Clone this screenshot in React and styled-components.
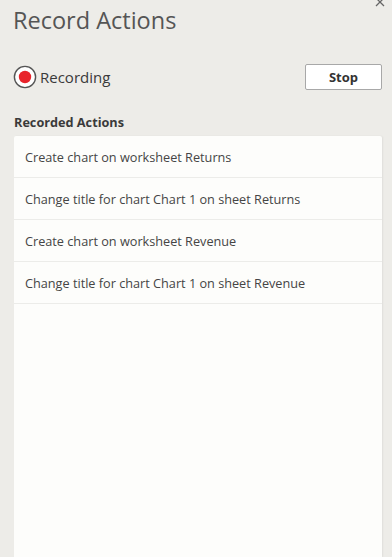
import React from "react";
import styled, { createGlobalStyle } from "styled-components";

const Global = createGlobalStyle`
  html, body { margin: 0; padding: 0; height: 100%; }
  body { background: #edece8; font-family: "Open Sans", "Noto Sans", sans-serif; }
  #root { height: 100%; }
`;

const Pane = styled.div`
  position: relative;
  height: 557px;
  box-sizing: border-box;
  padding: 0 10px 0 14px;
  display: flex;
  flex-direction: column;
  overflow: hidden;
`;

const Close = styled.svg`
  position: absolute;
  top: -2px;
  right: 6px;
`;

const Title = styled.h1`
  margin: 3px 0 0 -1px;
  font-size: 23.5px;
  font-weight: 400;
  color: #555;
  line-height: 34px;
`;

const StatusRow = styled.div`
  margin-top: 27px;
  display: flex;
  align-items: center;
  justify-content: space-between;
  height: 26px;
`;

const Status = styled.div`
  display: flex;
  align-items: center;
  gap: 3px;
  margin-left: -1px;
  font-size: 15px;
  color: #3a3a3a;
`;

const StopButton = styled.button`
  width: 77px;
  height: 26px;
  background: #fff;
  border: 1px solid #a8a8a8;
  border-radius: 2px;
  font-family: "Open Sans", sans-serif;
  font-weight: 700;
  font-size: 13px;
  color: #333;
  padding: 0;
`;

const SectionLabel = styled.div`
  margin-top: 23px;
  font-size: 12.7px;
  font-weight: 700;
  color: #3a3a3a;
  line-height: 18px;
`;

const List = styled.div`
  margin-top: 5px;
  flex: 1;
  background: #fdfdfb;
  border-radius: 2px 2px 0 0;
  box-shadow: 1px 0 2px rgba(0,0,0,0.06);
`;

const Item = styled.div`
  height: 41px;
  display: flex;
  align-items: center;
  padding-left: 11px;
  font-size: 12.7px;
  color: #454545;
  border-bottom: 1px solid #ecece9;
`;

const actions = [
  "Create chart on worksheet Returns",
  "Change title for chart Chart 1 on sheet Returns",
  "Create chart on worksheet Revenue",
  "Change title for chart Chart 1 on sheet Revenue",
];

const RecordIcon = () => (
  <svg width="24" height="24" viewBox="0 0 24 24">
    <circle cx="12" cy="12" r="10.6" fill="#fff" stroke="#555" strokeWidth="1.4" />
    <circle cx="12" cy="12" r="6.2" fill="#e8242b" />
  </svg>
);

export default function App() {
  return (
    <>
      <Global />
      <Pane>
        <Close width="12" height="10" viewBox="0 0 12 10">
          <path d="M2 0 L10 8 M10 0 L2 8" stroke="#666" strokeWidth="1.3" fill="none" />
        </Close>
        <Title>Record Actions</Title>
        <StatusRow>
          <Status>
            <RecordIcon />
            Recording
          </Status>
          <StopButton>Stop</StopButton>
        </StatusRow>
        <SectionLabel>Recorded Actions</SectionLabel>
        <List>
          {actions.map((a, i) => (
            <Item key={i}>{a}</Item>
          ))}
        </List>
      </Pane>
    </>
  );
}
